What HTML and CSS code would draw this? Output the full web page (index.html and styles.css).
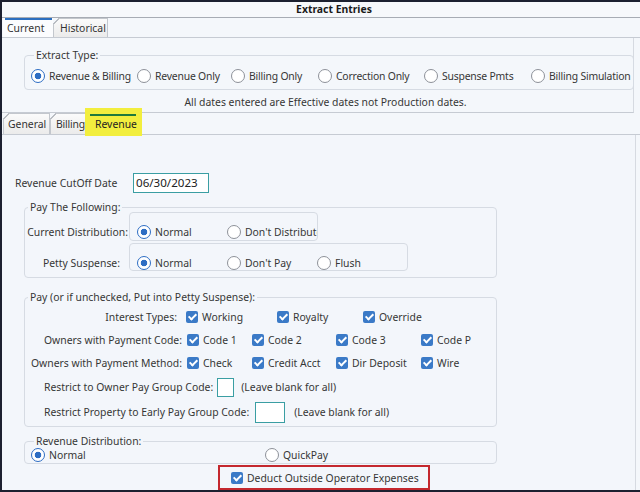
FILE: index.html
```html
<!DOCTYPE html>
<html>
<head>
<meta charset="utf-8">
<title>Extract Entries</title>
<link rel="stylesheet" href="styles.css">
</head>
<body>
<div class="window">
  <div class="titlebar">Extract Entries</div>
  <div class="tabstrip top">
    <div class="tab active t-current">Current</div>
    <div class="tab t-hist">Historical</div>
  </div>
  <div class="panel">
    <fieldset class="group extract">
      <legend>Extract Type:</legend>
      <div class="extract-grid">
        <span class="radio on">Revenue &amp; Billing</span>
        <span class="radio">Revenue Only</span>
        <span class="radio">Billing Only</span>
        <span class="radio">Correction Only</span>
        <span class="radio">Suspense Pmts</span>
        <span class="radio">Billing Simulation</span>
      </div>
    </fieldset>
    <div class="note">All dates entered are Effective dates not Production dates.</div>
  </div>
  <div class="tabstrip sub">
    <div class="tab t-gen">General</div>
    <div class="tab t-bill">Billing</div>
    <div class="tab rev t-rev"><span class="hl"></span>Revenue</div>
  </div>
  <div class="content">
    <div class="cutoff">
      <span class="cutoff-label">Revenue CutOff Date</span>
      <div class="textbox date">06/30/2023</div>
    </div>

    <fieldset class="group pay-following">
      <legend>Pay The Following:</legend>
      <div class="pf-row first">
        <span class="pf-label">Current Distribution:</span>
        <div class="subbox box1">
          <span class="radio on">Normal</span>
          <span class="radio">Don't Distribute</span>
        </div>
      </div>
      <div class="pf-row">
        <span class="pf-label petty">Petty Suspense:</span>
        <div class="subbox box2">
          <span class="radio on">Normal</span>
          <span class="radio">Don't Pay</span>
          <span class="radio">Flush</span>
        </div>
      </div>
    </fieldset>

    <fieldset class="group pay">
      <legend>Pay (or if unchecked, Put into Petty Suspense):</legend>
      <div class="crow r1">
        <span class="crow-label">Interest Types:</span>
        <span class="cb w91">Working</span>
        <span class="cb w86">Royalty</span>
        <span class="cb">Override</span>
      </div>
      <div class="crow r2">
        <span class="crow-label">Owners with Payment Code:</span>
        <span class="cb w65">Code 1</span>
        <span class="cb w84">Code 2</span>
        <span class="cb w85">Code 3</span>
        <span class="cb">Code P</span>
      </div>
      <div class="crow r3">
        <span class="crow-label">Owners with Payment Method:</span>
        <span class="cb w65">Check</span>
        <span class="cb w84">Credit Acct</span>
        <span class="cb w85">Dir Deposit</span>
        <span class="cb">Wire</span>
      </div>
      <div class="crow r4">
        <span class="plain">Restrict to Owner Pay Group Code:</span>
        <div class="textbox small"></div>
        <span class="hint">(Leave blank for all)</span>
      </div>
      <div class="crow r5">
        <span class="plain">Restrict Property to Early Pay Group Code:</span>
        <div class="textbox mid"></div>
        <span class="hint">(Leave blank for all)</span>
      </div>
    </fieldset>

    <fieldset class="group revdist">
      <legend>Revenue Distribution:</legend>
      <div class="rd-row">
        <span class="radio on rd-first">Normal</span>
        <span class="radio">QuickPay</span>
      </div>
    </fieldset>

    <div class="deduct">
      <span class="cb">Deduct Outside Operator Expenses</span>
    </div>
  </div>
</div>
</body>
</html>
```

FILE: styles.css
```css
* { box-sizing: border-box; }
html, body { margin: 0; padding: 0; }
body {
  width: 640px;
  height: 492px;
  overflow: hidden;
  background: #f7f9fc;
  font-family: "Noto Sans", "Open Sans", sans-serif;
  font-size: 10.4px;
  color: #363636;
}

.window {
  height: 492px;
  border-top: 2px solid #1c2030;
  border-left: 2px solid #1c2030;
  border-bottom: 2px solid #1c2030;
  background: #f4f7fb;
  display: flex;
  flex-direction: column;
}

.titlebar {
  flex: none;
  height: 16px;
  line-height: 15px;
  border-bottom: 1px solid #a7acb4;
  background: #f6f8fb;
  text-align: center;
  padding-left: 26px;
  font-weight: 700;
  color: #1a1a1a;
}

/* tabs */
.tabstrip {
  flex: none;
  display: flex;
  align-items: flex-end;
  padding-left: 1px;
  border-bottom: 1px solid #c6cbd3;
  background: #f4f7fb;
  position: relative;
}
.tabstrip.top { height: 20px; }
.tabstrip.sub { height: 22px; }

.tab {
  position: relative;
  height: 19px;
  line-height: 18px;
  border: 1px solid #c3c7cd;
  border-bottom: none;
  background: linear-gradient(#fbfbfb, #ebebeb);
  white-space: nowrap;
  color: #333;
}
.tab::before {
  content: "";
  position: absolute;
  left: -1px;
  top: -1px;
  width: 6px;
  height: 6px;
  background: linear-gradient(135deg, #f4f7fb 0 45%, #b9bdc3 45% 60%, transparent 60%);
}
.tabstrip.sub .tab { height: 21px; line-height: 20px; }

.tab.active {
  background: #fbfcfe;
  border-color: transparent;
}
.tab.active::before { display: none; }
.tab.active::after {
  content: "";
  position: absolute;
  left: 1px;
  right: 0;
  top: -1px;
  height: 2px;
  background: #2b6ebf;
}

.t-current { width: 50px; padding-left: 3px; }
.t-hist { width: 55px; padding-left: 6px; }
.t-gen { width: 47px; padding-left: 4px; }
.t-bill { width: 38px; padding-left: 5px; letter-spacing: -0.2px; }
.t-rev { width: 50px; padding-left: 6px; }

.tab.rev {
  background: transparent;
  z-index: 1;
  color: #222;
}
.tab.rev::before { display: none; }
.tab.rev::after {
  content: "";
  position: absolute;
  left: 1px;
  right: 1px;
  top: 0;
  height: 2px;
  background: #1e7a3c;
}
.hl {
  position: absolute;
  left: -4px;
  top: -6px;
  width: 57px;
  height: 28px;
  background: #f2ee3e;
  z-index: -1;
}

/* upper panel */
.panel {
  flex: none;
  height: 75px;
  margin-right: 6px;
  border-bottom: 1px solid #c6cbd3;
  border-right: 1px solid #d6dae1;
}

.group {
  margin: 0;
  padding: 0;
  min-width: 0;
  border: 1px solid #d6dbe3;
  border-radius: 4px;
}
.group legend {
  padding: 0 2px;
  margin-left: 3px;
  line-height: 12px;
  color: #363636;
}

.extract {
  margin: 11px 0 0 22px;
  width: 610px;
  padding: 7px 0 5px 6px;
}
.extract-grid {
  display: grid;
  grid-template-columns: 106px 94px 87px 106px 107px auto;
  height: 16px;
  align-items: center;
  letter-spacing: -0.2px;
}

.note {
  height: 22px;
  line-height: 22px;
  text-align: center;
  padding-left: 16px;
  padding-top: 1px;
}

/* radios & checkboxes */
.radio {
  display: inline-flex;
  align-items: center;
  white-space: nowrap;
  line-height: 16px;
}
.radio::before {
  content: "";
  flex: none;
  width: 12px;
  height: 12px;
  margin-right: 4px;
  border-radius: 50%;
  border: 1px solid #8d9199;
  background: #fff;
}
.radio.on::before {
  border: 1.3px solid #2d6dc3;
  background: radial-gradient(circle, #2d6dc3 0 3px, #fff 3.6px);
}

.cb {
  position: relative;
  display: inline-flex;
  align-items: center;
  white-space: nowrap;
  line-height: 16px;
  flex: none;
}
.cb::before {
  content: "";
  flex: none;
  width: 12px;
  height: 12px;
  margin-right: 4px;
  border-radius: 2px;
  background: #3b7ac7;
}
.cb::after {
  content: "";
  position: absolute;
  left: 4px;
  top: 50%;
  width: 3px;
  height: 6px;
  margin-top: -5px;
  border-right: 2px solid #fff;
  border-bottom: 2px solid #fff;
  transform: rotate(45deg);
}

/* content */
.content {
  flex: 1;
  min-height: 0;
  overflow: hidden;
  margin-right: 4px;
  border-right: 1px solid #d6dae1;
  background: #f3f6fb;
  padding: 38px 0 0 13px;
}

.cutoff {
  display: flex;
  align-items: center;
  height: 20px;
}
.cutoff-label { width: 118px; white-space: nowrap; }

.textbox {
  flex: none;
  border: 1px solid #3a9ea3;
  background: #fff;
}
.textbox.date {
  width: 76px;
  height: 20px;
  line-height: 18px;
  padding-left: 2px;
  font-size: 11.6px;
  color: #222;
}
.textbox.small { width: 17px; height: 19px; margin-left: 4px; }
.textbox.mid { width: 30px; height: 21px; margin-left: 6px; }

.pay-following {
  margin: 8px 0 0 9px;
  width: 473px;
  padding: 0 0 6px 0;
}
.pf-row { display: flex; align-items: flex-start; }
.pf-row.first { margin-top: -1px; }
.pf-row + .pf-row { margin-top: 2px; }
.pf-label {
  flex: none;
  width: 104px;
  margin-top: 12px;
  line-height: 16px;
  text-align: right;
  padding-right: 1px;
  white-space: nowrap;
}
.pf-label.petty { padding-right: 9px; }

.subbox {
  flex: none;
  display: flex;
  overflow: hidden;
  border: 1px solid #d6dbe3;
  border-radius: 4px;
  padding: 11px 0 0 7px;
}
.box1 { width: 189px; height: 29px; }
.box2 { width: 279px; height: 28px; }
.subbox .radio { flex: none; width: 90px; }

.pay {
  margin: 13px 0 0 9px;
  width: 473px;
  padding: 3px 0 2px 0;
}
.crow { display: flex; align-items: center; }
.r1 { height: 22px; }
.r2 { height: 23px; }
.r3 { height: 23px; }
.r4 { height: 26px; padding-left: 19px; }
.r5 { height: 24px; padding-left: 19px; }
.crow-label { flex: none; text-align: right; white-space: nowrap; }
.r1 .crow-label { width: 161px; padding-right: 9px; }
.r2 .crow-label, .r3 .crow-label { width: 162px; padding-right: 5px; }
.w91 { width: 91px; }
.w86 { width: 86px; }
.w65 { width: 65px; }
.w84 { width: 84px; }
.w85 { width: 85px; }
.plain { white-space: nowrap; }
.r4 .hint { margin-left: 7px; white-space: nowrap; }
.r5 .hint { margin-left: 9px; white-space: nowrap; }

.revdist {
  margin: 8px 0 0 9px;
  width: 473px;
  padding: 0 0 0 6px;
}
.rd-row { display: flex; align-items: center; height: 16px; }
.rd-first { width: 234px; }

.deduct {
  margin: 1px 0 0 203px;
  width: 212px;
  height: 25px;
  border: 2px solid #c4282e;
  display: flex;
  align-items: center;
  padding-left: 11px;
}
```
